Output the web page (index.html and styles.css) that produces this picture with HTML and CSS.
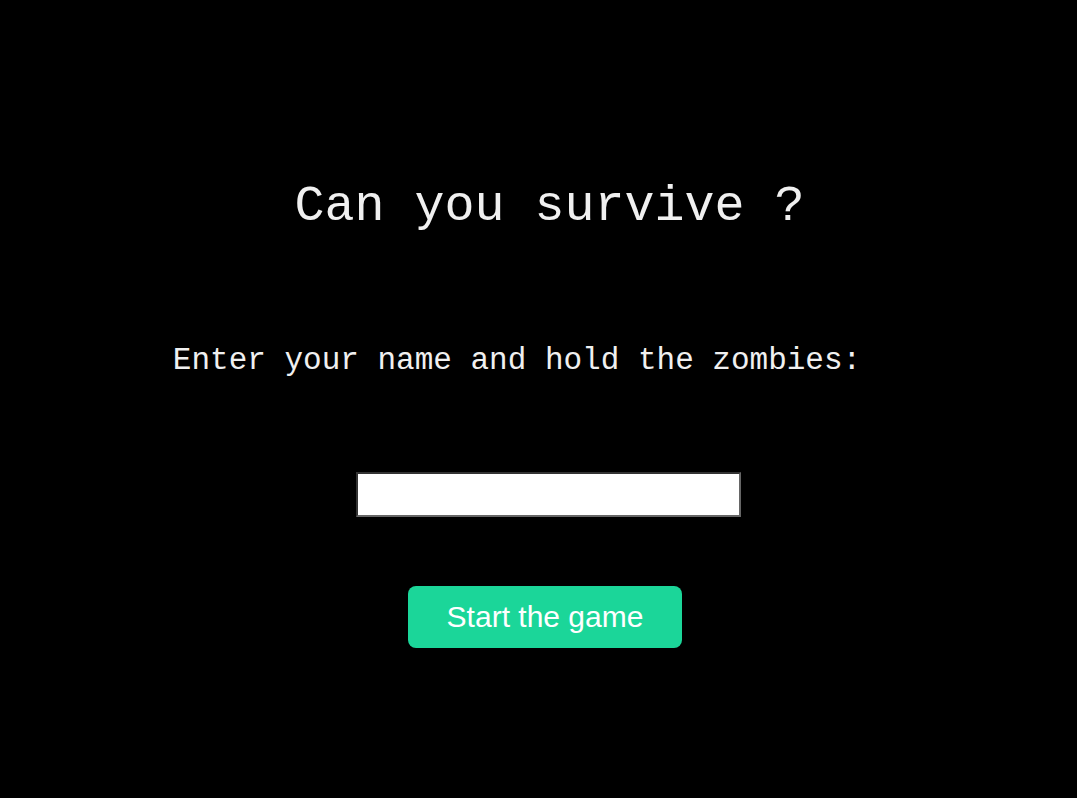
FILE: index.html
```html
<!DOCTYPE html>
<html>
<head>
<meta charset="utf-8">
<link rel="stylesheet" href="styles.css">
</head>
<body>
<main class="screen">
  <h1 class="title">Can you survive ?</h1>
  <p class="prompt">Enter your name and hold the zombies:</p>
  <input class="name-input" type="text">
  <button class="start-btn">Start the game</button>
</main>
</body>
</html>
```
FILE: styles.css
```css
html, body {
  margin: 0;
  padding: 0;
  background: #000;
  height: 100%;
}
.screen {
  display: flex;
  flex-direction: column;
  align-items: center;
  padding-top: 177px;
}
.title {
  margin: 0 0 0 22px;
  font-family: "Liberation Mono", "Courier New", monospace;
  font-weight: normal;
  font-size: 50px;
  line-height: 60px;
  color: #f0f0f0;
}
.prompt {
  margin: 105px 43px 0 0;
  font-family: "Liberation Mono", "Courier New", monospace;
  font-size: 31px;
  line-height: 38px;
  color: #f0f0f0;
}
.name-input {
  margin: 92px 0 0 19px;
  box-sizing: border-box;
  height: 45px;
  width: 385px;
  border: 2px solid;
  border-color: #333 #666 #666 #333;
  background: #fff;
  padding: 0 4px;
}
.start-btn {
  margin: 69px 0 0 13px;
  width: 274px;
  height: 62px;
  border: none;
  border-radius: 8px;
  background: #1bd699;
  color: #fff;
  font-family: "Liberation Sans", Arial, sans-serif;
  font-size: 30px;
  cursor: pointer;
}
```
